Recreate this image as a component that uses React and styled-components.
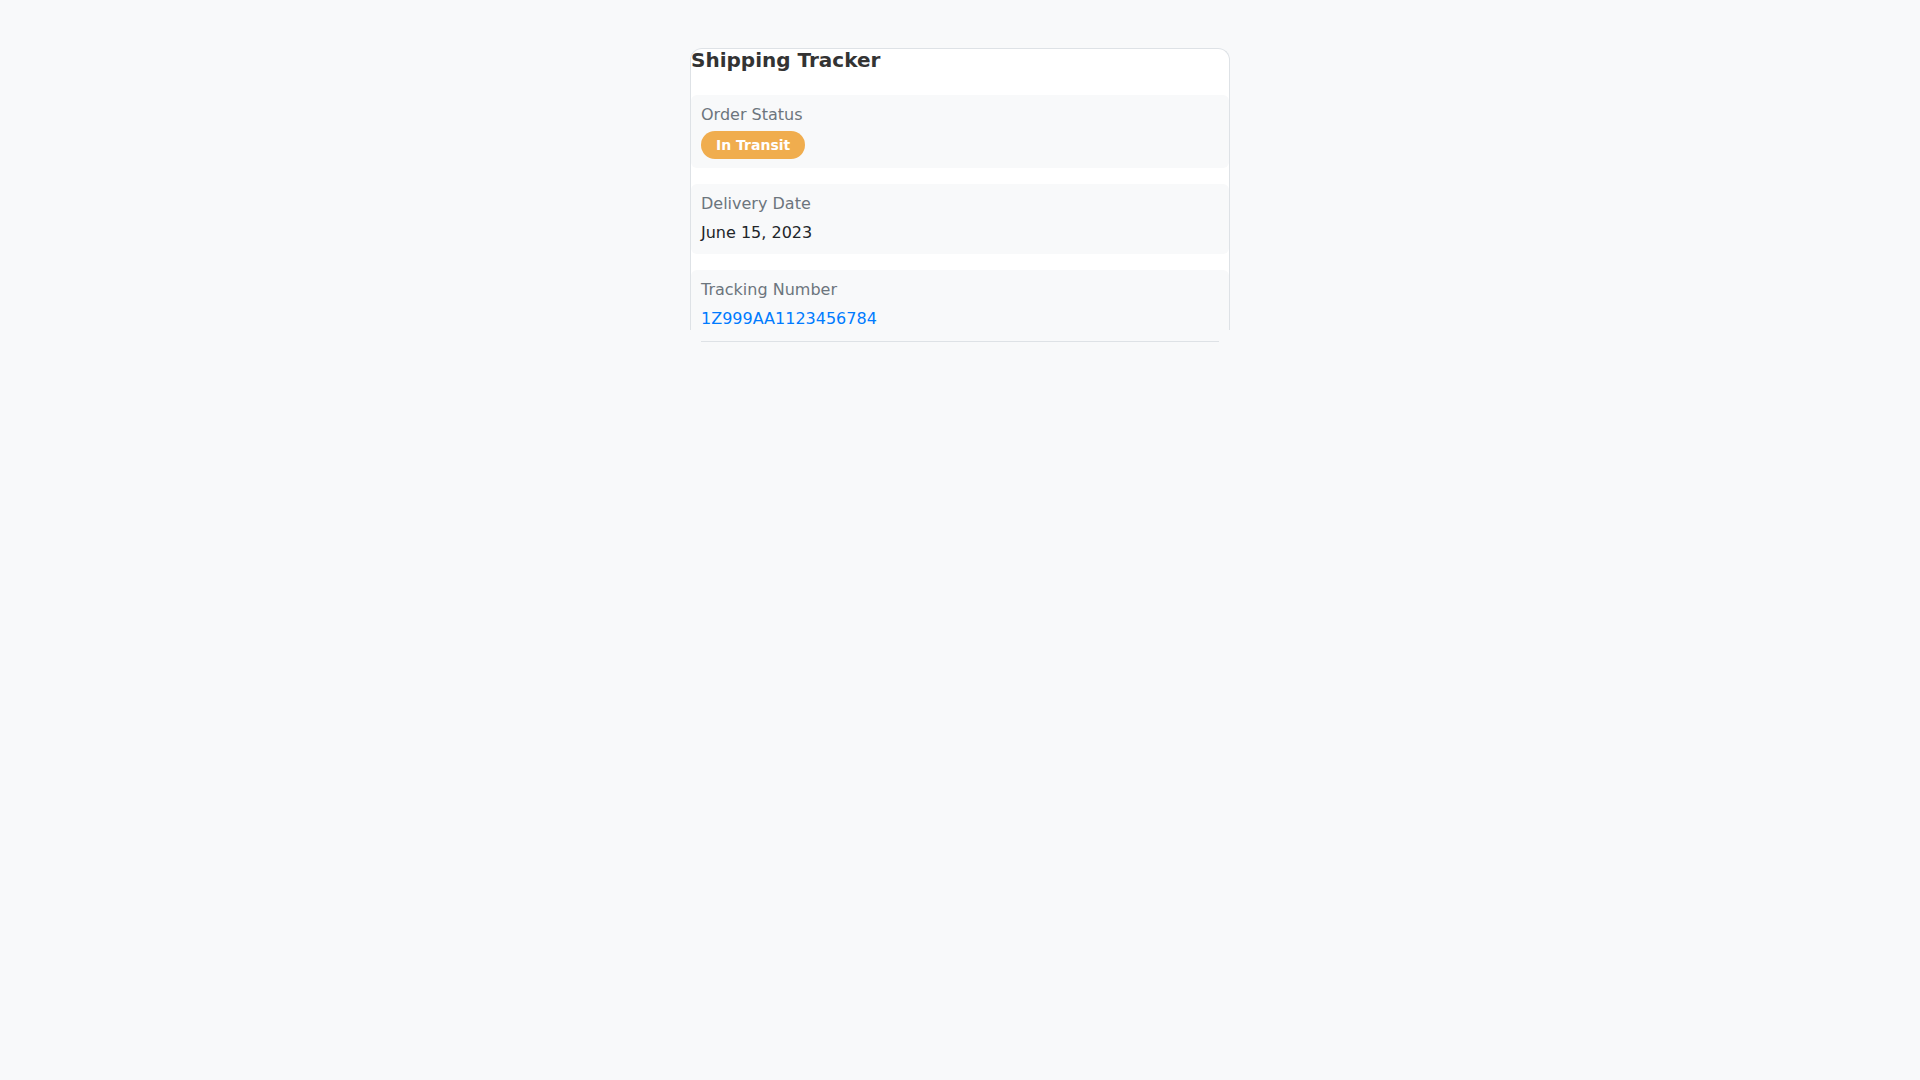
import React from "react"
import styled, { createGlobalStyle } from "styled-components"

const GlobalStyle = createGlobalStyle`
  body {
    margin: 0;
    background-color: #f8f9fa;
    font-family: "DejaVu Sans", "Noto Sans", sans-serif;
  }
`

const Page = styled.div`
  padding-top: 48px;
`

const Card = styled.section`
  box-sizing: border-box;
  width: 540px;
  height: 282px;
  margin: 0 auto;
  background-color: #fff;
  border: 1px solid #dee2e6;
  border-bottom: none;
  border-radius: 12px 12px 0 0;
  overflow: hidden;
`

const Title = styled.h2`
  margin: 0 0 24px;
  font-size: 20px;
  line-height: 22px;
  font-weight: 700;
  color: #333;
`

const Row = styled.div`
  padding: 10px 10px 9px;
  margin-bottom: 16px;
  background-color: #f8f9fa;
  border-radius: 6px;
`

const Label = styled.div`
  font-size: 16px;
  color: #6c757d;
  margin-bottom: 7px;
`

const Value = styled.div`
  font-size: 16px;
  line-height: 25px;
  color: ${(p) => (p.$link ? "#007bff" : "#212529")};
`

const Badge = styled.span`
  display: inline-block;
  padding: 6px 15px;
  font-size: 14px;
  font-weight: 700;
  color: #fff;
  background-color: #f0ad4e;
  border-radius: 999px;
`

const Divider = styled.hr`
  box-sizing: border-box;
  width: 518px;
  margin: 11px auto 0;
  border: none;
  border-top: 1px solid #dee2e6;
`

const App = () => {
  return (
    <>
      <GlobalStyle />
      <Page>
        <Card>
          <Title>Shipping Tracker</Title>
          <Row>
            <Label>Order Status</Label>
            <Badge>In Transit</Badge>
          </Row>
          <Row>
            <Label>Delivery Date</Label>
            <Value>June 15, 2023</Value>
          </Row>
          <Row>
            <Label>Tracking Number</Label>
            <Value $link>1Z999AA1123456784</Value>
          </Row>
        </Card>
        <Divider />
      </Page>
    </>
  )
}

export default App
